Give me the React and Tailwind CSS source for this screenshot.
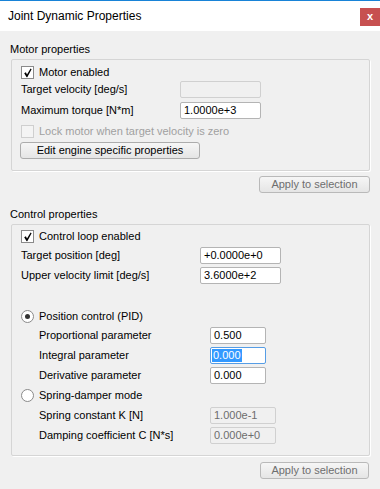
import React from "react";

const FONT = "font-['Liberation_Sans',Arial,sans-serif]";

function Check({ checked, disabled }) {
  return (
    <span
      className={`w-[13px] h-[13px] shrink-0 border flex items-center justify-center ${
        disabled ? "border-[#cfcfcf] bg-[#f4f4f4]" : "border-[#8a8a8a] bg-white"
      }`}
    >
      {checked && (
        <svg width="9" height="10" viewBox="0 0 9 10">
          <path d="M1.2 5.2 L2.9 4.3 L4 6.4 L7.6 0.6 L8.6 1.3 L4.3 9.2 L3.6 9.2 Z" fill="#000" />
        </svg>
      )}
    </span>
  );
}

function Radio({ checked }) {
  return (
    <span className="w-[13px] h-[13px] shrink-0 rounded-full border border-[#8a8a8a] bg-white flex items-center justify-center">
      {checked && <span className="w-[5px] h-[5px] rounded-full bg-[#333333]" />}
    </span>
  );
}

function Field({ value, w, disabled, focused }) {
  let cls = "border-[#b4b4b4] bg-white text-black";
  if (disabled) cls = "border-[#d0d0d0] bg-[#f0f0f0] text-[#6d6d6d]";
  if (focused) cls = "border-[#569de5] bg-white text-black";
  return (
    <div className={`${w} h-[17px] shrink-0 border rounded-[2px] flex items-center pl-[1px] text-[11px] leading-[13px] ${cls}`}>
      {focused ? (
        <span className="bg-[#3399ff] text-white pl-[1px] pr-[1px] h-[13px] flex items-center">{value}</span>
      ) : (
        <span className="pl-[2px]">{value}</span>
      )}
    </div>
  );
}

function Btn({ children, w, dim }) {
  return (
    <div
      className={`${w} h-[17px] border rounded-[3px] flex items-center justify-center text-[11px] bg-gradient-to-b from-[#f6f6f6] to-[#e5e5e5] ${
        dim ? "border-[#b9b9b9] text-[#6e6e6e]" : "border-[#acacac] text-black"
      }`}
    >
      {children}
    </div>
  );
}

function Row({ label, labelW, children, className = "" }) {
  return (
    <div className={`flex items-center h-[17px] ${className}`}>
      <span className={`${labelW} shrink-0 text-[11px] leading-[17px] text-black`}>{label}</span>
      {children}
    </div>
  );
}

function Group({ children, className = "" }) {
  return (
    <div className={`border border-[#d5d5d5] rounded-[2px] shadow-[1px_1px_0_#ffffff] pl-[9px] pr-[9px] ${className}`}>
      {children}
    </div>
  );
}

export default function App() {
  return (
    <div className={`w-[380px] h-[489px] bg-[#f0f0f0] overflow-hidden ${FONT}`}>
      <div className="h-[31px] bg-white border-t border-[#1883d7] flex items-start justify-between">
        <span className="pl-[8px] pt-[7px] text-[12px] leading-[16px] text-black">Joint Dynamic Properties</span>
        <div className="mt-[7px] w-[20px] h-[18px] bg-[#c75050] flex items-center justify-center text-white text-[11px] font-bold leading-none pb-[2px]">
          x
        </div>
      </div>

      <div className="pl-[11px] pr-[10px]">
        <div className="h-[28px] pt-[11px] -ml-[1px] text-[11px] leading-[14px] text-black">Motor properties</div>
        <Group className="pt-[6px] pb-[11px]">
          <div className="flex items-center h-[13px] gap-[5px]">
            <Check checked />
            <span className="text-[11px] leading-[13px] text-black">Motor enabled</span>
          </div>
          <Row label="Target velocity [deg/s]" labelW="w-[159px]" className="mt-[2px]">
            <Field value="" w="w-[81px]" disabled />
          </Row>
          <Row label="Maximum torque [N*m]" labelW="w-[159px]" className="mt-[4px]">
            <Field value="1.0000e+3" w="w-[81px]" />
          </Row>
          <div className="flex items-center h-[17px] gap-[5px] mt-[4px]">
            <Check disabled />
            <span className="text-[11px] leading-[13px] text-[#a0a0a0]">Lock motor when target velocity is zero</span>
          </div>
          <div className="mt-[2px] -ml-[1px]">
            <Btn w="w-[180px]">Edit engine specific properties</Btn>
          </div>
        </Group>
        <div className="mt-[5px] flex justify-end">
          <Btn w="w-[111px]" dim>
            Apply to selection
          </Btn>
        </div>

        <div className="h-[31px] pt-[14px] -ml-[1px] text-[11px] leading-[14px] text-black">Control properties</div>
        <Group className="pt-[5px] pb-[11px]">
          <div className="flex items-center h-[13px] gap-[5px]">
            <Check checked />
            <span className="text-[11px] leading-[13px] text-black">Control loop enabled</span>
          </div>
          <Row label="Target position [deg]" labelW="w-[179px]" className="mt-[4px]">
            <Field value="+0.0000e+0" w="w-[81px]" />
          </Row>
          <Row label="Upper velocity limit [deg/s]" labelW="w-[179px]" className="mt-[3px]">
            <Field value="3.6000e+2" w="w-[81px]" />
          </Row>

          <div className="flex items-center h-[13px] gap-[5px] mt-[26px]">
            <Radio checked />
            <span className="text-[11px] leading-[13px] text-black">Position control (PID)</span>
          </div>
          <div className="pl-[18px]">
            <Row label="Proportional parameter" labelW="w-[171px]" className="mt-[4px]">
              <Field value="0.500" w="w-[56px]" />
            </Row>
            <Row label="Integral parameter" labelW="w-[171px]" className="mt-[3px]">
              <Field value="0.000" w="w-[56px]" focused />
            </Row>
            <Row label="Derivative parameter" labelW="w-[171px]" className="mt-[3px]">
              <Field value="0.000" w="w-[56px]" />
            </Row>
          </div>
          <div className="flex items-center h-[13px] gap-[5px] mt-[5px]">
            <Radio />
            <span className="text-[11px] leading-[13px] text-black">Spring-damper mode</span>
          </div>
          <div className="pl-[18px]">
            <Row label="Spring constant K [N]" labelW="w-[171px]" className="mt-[5px]">
              <Field value="1.000e-1" w="w-[66px]" disabled />
            </Row>
            <Row label="Damping coefficient C [N*s]" labelW="w-[171px]" className="mt-[3px]">
              <Field value="0.000e+0" w="w-[66px]" disabled />
            </Row>
          </div>
        </Group>
        <div className="mt-[6px] flex justify-end pr-[1px]">
          <Btn w="w-[109px]" dim>
            Apply to selection
          </Btn>
        </div>
      </div>
    </div>
  );
}
